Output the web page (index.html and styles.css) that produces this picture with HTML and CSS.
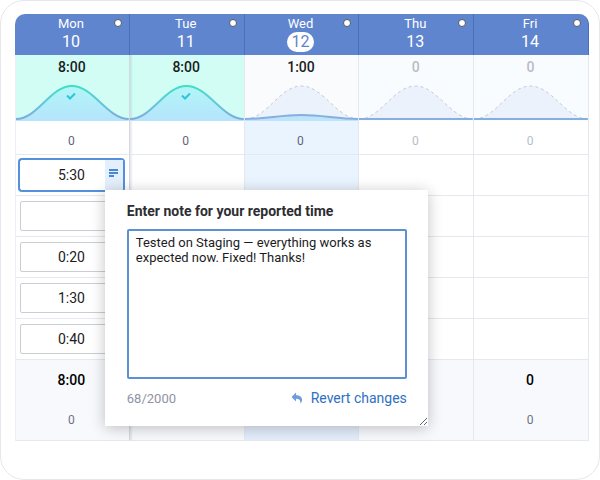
FILE: index.html
```html
<!DOCTYPE html>
<html lang="en">
<head>
  <meta charset="utf-8"/>
  <meta name="viewport" content="width=device-width, initial-scale=1.0"/>
  <title>Timesheet</title>
  <link rel="stylesheet" href="styles.css">
</head>
<body>
  <svg class="defs" aria-hidden="true">
    <linearGradient id="line" x1="0" y1="0" x2="0" y2="1"><stop offset="0" stop-color="#3fe0c4"/><stop offset="0.5" stop-color="#62c8d8"/><stop offset="1" stop-color="#82a9dd"/></linearGradient>
    <linearGradient id="area" x1="0" y1="0" x2="0" y2="1"><stop offset="0" stop-color="#b2f6f6"/><stop offset="1" stop-color="#b5e4fd"/></linearGradient>
  </svg>

  <div class="card">
    <table class="sheet">
      <thead>
        <tr>
          <th scope="col">Mon<br><span class="date">10</span><i class="dot"></i></th>
          <th scope="col">Tue<br><span class="date">11</span><i class="dot"></i></th>
          <th scope="col">Wed<br><span class="date current">12</span><i class="dot"></i></th>
          <th scope="col">Thu<br><span class="date">13</span><i class="dot"></i></th>
          <th scope="col">Fri<br><span class="date">14</span><i class="dot"></i></th>
        </tr>
      </thead>
      <tbody>
        <tr class="charts">
          <td class="done">
            <div class="hours">8:00</div>
            <svg class="curve" viewBox="0 0 115 42" preserveAspectRatio="none"><path class="fill" d="M0 40C22 40 35 7 57 7S93 40 115 40V42H0Z"/><path class="stroke" d="M0 40C22 40 35 7 57 7S93 40 115 40"/></svg>
            <svg class="check" viewBox="0 0 10 8"><path d="M1 3.5L4 6.5L9 1.5"/></svg>
          </td>
          <td class="done">
            <div class="hours">8:00</div>
            <svg class="curve" viewBox="0 0 115 42" preserveAspectRatio="none"><path class="fill" d="M0 40C22 40 35 7 57 7S93 40 115 40V42H0Z"/><path class="stroke" d="M0 40C22 40 35 7 57 7S93 40 115 40"/></svg>
            <svg class="check" viewBox="0 0 10 8"><path d="M1 3.5L4 6.5L9 1.5"/></svg>
          </td>
          <td class="today">
            <div class="hours">1:00</div>
            <svg class="curve" viewBox="0 0 115 42" preserveAspectRatio="none"><path class="plan" d="M0 40C22 40 35 7 57 7S93 40 115 40"/><path class="part" d="M0 40C22 40 35 36 57 36S93 40 115 40V42H0Z"/><path class="base" d="M0 40C22 40 35 36 57 36S93 40 115 40"/></svg>
          </td>
          <td class="idle">
            <div class="hours">0</div>
            <svg class="curve" viewBox="0 0 115 42" preserveAspectRatio="none"><path class="plan" d="M0 40C22 40 35 7 57 7S93 40 115 40"/><path class="base" d="M0 40H115"/></svg>
          </td>
          <td class="idle">
            <div class="hours">0</div>
            <svg class="curve" viewBox="0 0 115 42" preserveAspectRatio="none"><path class="plan" d="M0 40C22 40 35 7 57 7S93 40 115 40"/><path class="base" d="M0 40H115"/></svg>
          </td>
        </tr>
        <tr class="counts"><td>0</td><td>0</td><td class="today">0</td><td class="idle">0</td><td class="idle">0</td></tr>
        <tr class="entry">
          <td>
            <div class="field active">
              <input type="text" value="5:30" aria-label="Monday, entry 1">
              <button class="note-btn" type="button" aria-label="Note"><svg viewBox="0 0 10 8"><path d="M0 1H9M0 4H9M0 7H5"/></svg></button>
              <form class="popover">
                <label for="note">Enter note for your reported time</label>
                <textarea id="note">Tested on Staging — everything works as expected now. Fixed! Thanks!</textarea>
                <div class="popover-foot">
                  <span>68/2000</span>
                  <button class="revert" type="reset"><svg viewBox="0 0 12 12"><path d="M5 0.5L0.5 5L5 9.5V6.8C8 6.6 9.6 8 9.4 11.5C13 7.5 10.6 3.2 5 3.2Z"/></svg>Revert changes</button>
                </div>
              </form>
            </div>
          </td>
          <td></td><td class="today"></td><td></td><td></td>
        </tr>
        <tr class="entry"><td><div class="field"><input type="text" aria-label="Monday, entry 2"></div></td><td></td><td class="today"></td><td></td><td></td></tr>
        <tr class="entry"><td><div class="field"><input type="text" value="0:20" aria-label="Monday, entry 3"></div></td><td></td><td class="today"></td><td></td><td></td></tr>
        <tr class="entry"><td><div class="field"><input type="text" value="1:30" aria-label="Monday, entry 4"></div></td><td></td><td class="today"></td><td></td><td></td></tr>
        <tr class="entry"><td><div class="field"><input type="text" value="0:40" aria-label="Monday, entry 5"></div></td><td></td><td class="today"></td><td></td><td></td></tr>
      </tbody>
      <tfoot>
        <tr class="sum"><td>8:00</td><td></td><td class="today"></td><td></td><td>0</td></tr>
        <tr class="rest"><td>0</td><td></td><td class="today"></td><td></td><td>0</td></tr>
      </tfoot>
    </table>
  </div>
</body>
</html>
```
FILE: styles.css
```css
* { box-sizing:border-box; }
body { margin:0; background:#fff; color:#1c1c1e; font-family:Roboto, sans-serif; font-size:14px; }
input, textarea, button { font-family:inherit; color:inherit; margin:0; }
.defs { position:absolute; width:0; height:0; }

.card { min-height:100vh; padding:13px 10px 13px 14px; border:1px solid #e6e7ea; border-radius:24px; }

/* grid */
.sheet { width:100%; table-layout:fixed; border-collapse:separate; border-spacing:0; text-align:center; }
.sheet th, .sheet td { padding:0; border-right:1px solid #e6e8f0; }
.sheet td { border-bottom:1px solid #e6e8f0; }
.sheet td:first-child { border-left:1px solid #eef0f5; border-right-color:#d5d8e0; }
.sheet td:nth-child(2) { background-image:linear-gradient(to right, rgba(60,70,110,0.14), transparent 3px); }

.sheet th { position:relative; height:41px; background:#6085cf; border-right-color:#4c6fbb; color:#fff; font-size:13px; font-weight:400; line-height:16px; vertical-align:top; padding:2px 2px 0 0; }
.sheet th:first-child { border-top-left-radius:10px; }
.sheet th:last-child { border-top-right-radius:10px; }
.date { display:inline-block; padding:0 5px; border-radius:10px; font-size:16px; font-weight:400; line-height:20px; }
.date.current { background:#fff; color:#6085cf; }
.dot { position:absolute; top:5px; right:7px; width:8px; height:8px; border:1px solid #55585f; border-radius:50%; background:#fff; }

/* daily curves */
.sheet .charts td { position:relative; height:66px; border-bottom:0; background-color:#f8fcfe; }
.sheet .charts .done { background-color:#d1fdf5; }
.sheet .charts .today { background-color:#fafbfc; }
.hours { height:24px; padding-right:1px; font-weight:500; line-height:24px; }
.curve { display:block; width:100%; height:42px; fill:none; }
.curve path { vector-effect:non-scaling-stroke; stroke-width:2; }
.curve .fill { fill:url(#area); stroke:none; }
.curve .part { fill:#bce4fb; }
.curve .stroke { stroke:url(#line); }
.curve .plan { fill:#ebf2fb; stroke:#c4c9dc; stroke-width:1; stroke-dasharray:3 3; }
.curve .base { stroke:#86afdf; }
.check { position:absolute; top:37px; left:50%; width:10px; height:8px; margin-left:-6px; fill:none; stroke:#2cc6dc; stroke-width:2; }

.counts td { height:34px; color:#5d6479; font-size:12px; }
.sheet .counts td { padding:6px 2px 0 0; }
.sheet .idle { color:#b9bdc8; }
.sheet .today { background-color:#eaf4fe; }

/* time fields */
.entry td { height:41px; }
.field { position:relative; height:30px; margin:0 5px 0 4px; }
.sheet .entry td { padding-right:1px; }
.field input { display:block; width:100%; height:30px; border:1px solid #cbcdd3; border-radius:2px; background:#fff; text-align:center; font-size:14px; padding:0; }
.field.active input { border-color:#fff; box-shadow:0 0 0 2px #5490dc; outline:none; }
.note-btn { position:absolute; top:0; right:0; width:18px; height:30px; padding:0; border:0; background:#e3effb; }
.note-btn svg { display:block; width:10px; height:8px; margin:0 auto 4px; stroke:#4a86d6; stroke-width:2; }

/* totals */
.sheet tfoot td { padding-right:2px; background-color:#f8f9fc; }
.sheet tfoot .today { background-color:#e3edfb; }
.sheet .sum td { height:40px; border-bottom:0; color:#000; font-weight:500; }
.sheet .rest td { height:41px; color:#6c7182; font-size:12px; }

/* note popover */
.popover { position:absolute; top:30px; left:calc(100% - 18px); z-index:2; width:323px; height:236px; padding:11px 21px 18px 22px; overflow:hidden; resize:both; display:flex; flex-direction:column; background:#fff; box-shadow:0 2px 14px rgba(0,0,0,0.24); text-align:left; }
.popover label { margin-bottom:8px; color:#2d2e33; font-weight:700; line-height:20px; }
.popover textarea { flex:1; width:100%; padding:4px 7px; border:2px solid #5b90d2; border-radius:2px; outline:none; resize:none; background:#fff; font-size:13px; line-height:15px; }
.popover-foot { display:flex; justify-content:space-between; align-items:center; height:20px; margin-top:9px; color:#8f92a3; font-size:13px; }
.revert { display:flex; align-items:center; gap:8px; padding:0; border:0; background:none; color:#2f6fc4; font-size:14px; cursor:pointer; }
.revert svg { width:12px; height:12px; fill:#6f9be0; }
```
